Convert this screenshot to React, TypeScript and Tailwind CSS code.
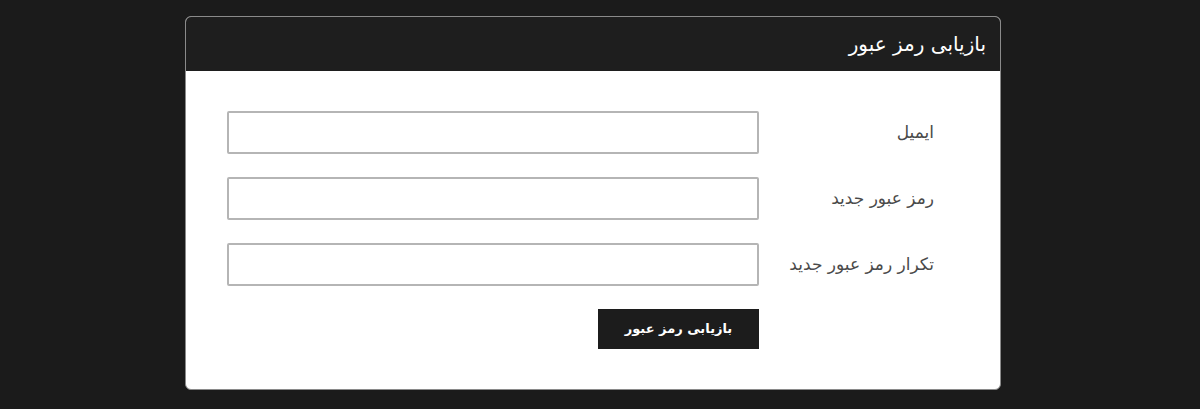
const fields = ["ایمیل", "رمز عبور جدید", "تکرار رمز عبور جدید"];

export default function App() {
  return (
    <div
      className="min-h-[409px] w-full bg-[#1b1b1b] pt-[16px]"
      style={{ fontFamily: '"DejaVu Sans", "Noto Sans", sans-serif' }}
    >
      <div dir="rtl" className="ml-[185px] w-[816px] rounded-[6px] border border-[#8a8a8a] bg-white overflow-hidden">
        <div className="flex h-[54px] items-center bg-[#1e1e1e] pr-[14px] text-[20px] text-white">
          بازیابی رمز عبور
        </div>
        <div className="flex flex-col gap-[23px] pb-[40px] pr-[66px] pt-[40px]">
          {fields.map((f) => (
            <div key={f} className="flex items-center">
              <label className="w-[175px] pl-[20px] text-right text-[17px] text-[#4a4a4a]">{f}</label>
              <input
                type="text"
                className="h-[43px] w-[532px] rounded-[2px] border-2 border-[#b5b5b5] bg-white px-2 outline-none"
              />
            </div>
          ))}
          <div className="flex pr-[175px]">
            <button className="h-[40px] w-[161px] bg-[#1c1c1c] text-[13px] font-bold text-white">
              بازیابی رمز عبور
            </button>
          </div>
        </div>
      </div>
    </div>
  );
}
